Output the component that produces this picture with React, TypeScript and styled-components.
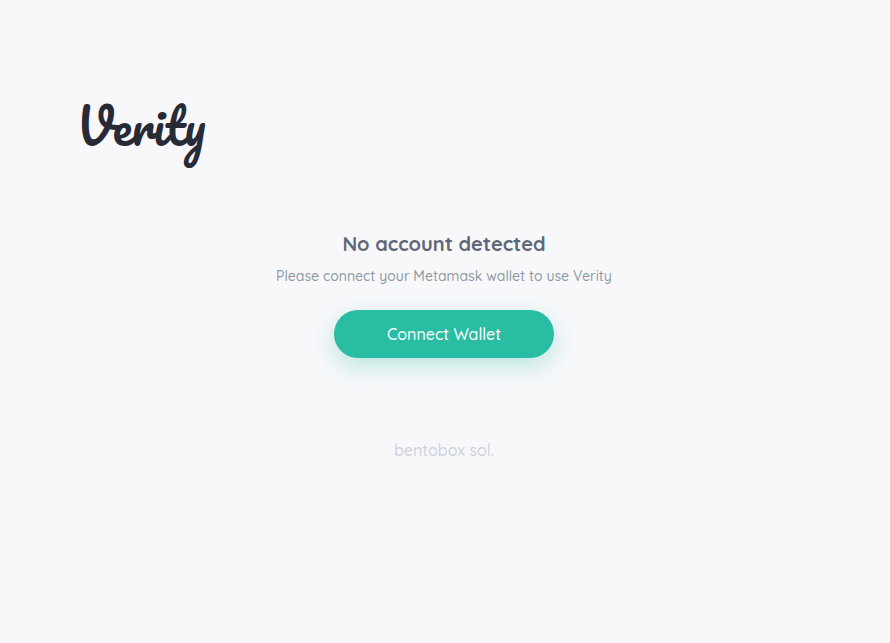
import React from "react";
import styled, { createGlobalStyle } from "styled-components";

const GlobalStyle = createGlobalStyle`
  * { box-sizing: border-box; }
  body {
    margin: 0;
    background: #f8f8fb;
    font-family: Quicksand, Lato, "Open Sans", sans-serif;
    font-weight: 500;
  }
`;

const Page = styled.div`
  width: 888px;
  min-height: 643px;
  padding: 90px 80px 0;
  display: flex;
  flex-direction: column;
`;

const Logo = styled.h1`
  align-self: flex-start;
  margin: 0 0 0 -4px;
  height: 72px;
  color: #282b35;
  font-family: Pacifico, Lato, cursive;
  font-size: 48px;
  font-weight: 400;
  line-height: 72px;
  white-space: nowrap;
`;

const Main = styled.main`
  margin-top: 68px;
  display: flex;
  flex-direction: column;
  align-items: center;
`;

const Title = styled.h2`
  margin: 0;
  color: #5f6877;
  font-size: 20px;
  font-weight: 700;
  line-height: 28px;
  white-space: nowrap;
`;

const Message = styled.p`
  margin: 8px 0 0;
  color: #8c98a4;
  font-size: 14px;
  line-height: 20px;
  white-space: nowrap;
`;

const ConnectButton = styled.button`
  width: 220px;
  height: 48px;
  margin-top: 24px;
  padding: 0;
  border: 0;
  border-radius: 24px;
  background: #29bda3;
  box-shadow: 0 8px 24px rgba(41, 189, 163, 0.3);
  color: #fff;
  font-family: inherit;
  font-size: 16px;
  font-weight: 500;
  line-height: 24px;
  cursor: pointer;
`;

const Footer = styled.footer`
  margin-top: 80px;
  color: #cdd2dd;
  font-size: 16px;
  line-height: 24px;
  text-align: center;
`;

export default function App() {
  return (
    <>
      <GlobalStyle />
      <Page>
        <Logo>Verity</Logo>
        <Main>
          <Title>No account detected</Title>
          <Message>Please connect your Metamask wallet to use Verity</Message>
          <ConnectButton type="button">Connect Wallet</ConnectButton>
        </Main>
        <Footer>bentobox sol.</Footer>
      </Page>
    </>
  );
}
